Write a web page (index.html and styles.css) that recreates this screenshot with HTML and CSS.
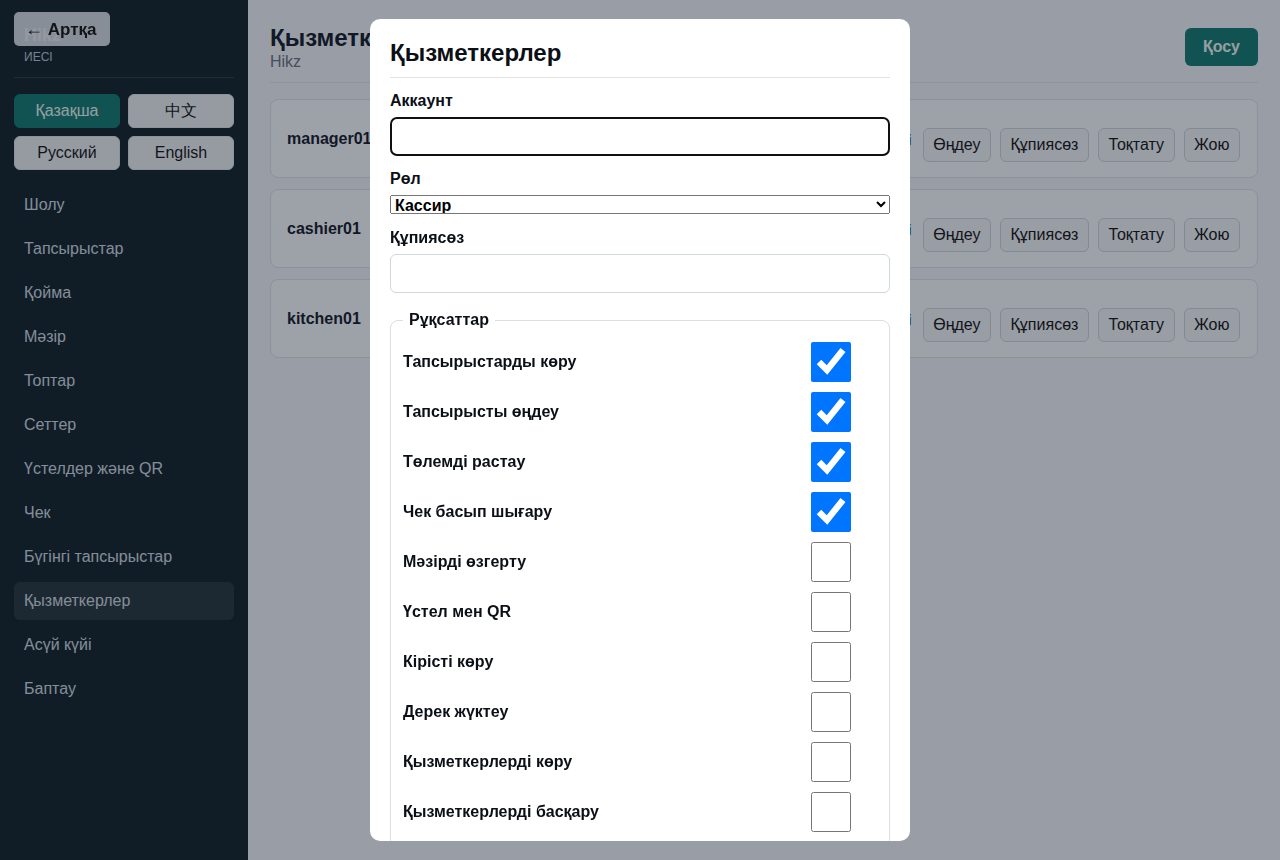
FILE: index.html
```html
<!DOCTYPE html>
<html lang="kk">
<head>
    <meta charset="utf-8">
    <title>Қызметкерлер — Hikz</title>
    <link rel="stylesheet" href="styles.css">
</head>
<body>
    <div class="layout">
        <aside class="sidebar">
            <div class="brand">
                <div class="brand-name">Hikz</div>
                <div class="brand-role">ИЕСІ</div>
            </div>

            <div class="langs">
                <button class="lang-btn active">Қазақша</button>
                <button class="lang-btn">中文</button>
                <button class="lang-btn">Русский</button>
                <button class="lang-btn">English</button>
            </div>

            <nav class="nav">
                <a class="nav-link" href="#">Шолу</a>
                <a class="nav-link" href="#">Тапсырыстар</a>
                <a class="nav-link" href="#">Қойма</a>
                <a class="nav-link" href="#">Мәзір</a>
                <a class="nav-link" href="#">Топтар</a>
                <a class="nav-link" href="#">Сеттер</a>
                <a class="nav-link" href="#">Үстелдер және QR</a>
                <a class="nav-link" href="#">Чек</a>
                <a class="nav-link" href="#">Бүгінгі тапсырыстар</a>
                <a class="nav-link active" href="#">Қызметкерлер</a>
                <a class="nav-link" href="#">Асүй күйі</a>
                <a class="nav-link" href="#">Баптау</a>
            </nav>
        </aside>

        <main class="main">
            <header class="page-head">
                <div>
                    <h1 class="page-title">Қызметкерлер</h1>
                    <div class="page-sub">Hikz</div>
                </div>
                <button class="btn-primary">Қосу</button>
            </header>

            <div class="staff-list">
                <div class="staff-card">
                    <div class="staff-name">manager01</div>
                    <div class="staff-actions">
                        <span class="status">Белсенді</span>
                        <button class="btn">Өңдеу</button>
                        <button class="btn">Құпиясөз</button>
                        <button class="btn">Тоқтату</button>
                        <button class="btn">Жою</button>
                    </div>
                </div>
                <div class="staff-card">
                    <div class="staff-name">cashier01</div>
                    <div class="staff-actions">
                        <span class="status">Белсенді</span>
                        <button class="btn">Өңдеу</button>
                        <button class="btn">Құпиясөз</button>
                        <button class="btn">Тоқтату</button>
                        <button class="btn">Жою</button>
                    </div>
                </div>
                <div class="staff-card">
                    <div class="staff-name">kitchen01</div>
                    <div class="staff-actions">
                        <span class="status">Белсенді</span>
                        <button class="btn">Өңдеу</button>
                        <button class="btn">Құпиясөз</button>
                        <button class="btn">Тоқтату</button>
                        <button class="btn">Жою</button>
                    </div>
                </div>
            </div>
        </main>
    </div>

    <!-- back link sits on top of the sidebar brand -->
    <a class="back-btn" href="#"><span class="back-arrow">←</span> Артқа</a>

    <div class="overlay">
        <div class="modal">
            <h2 class="modal-title">Қызметкерлер</h2>

            <label class="field-label" for="account">Аккаунт</label>
            <input class="field-input" id="account" type="text" autofocus>

            <label class="field-label" for="role">Рөл</label>
            <select class="field-select" id="role">
                <option>Кассир</option>
                <option>Менеджер</option>
                <option>Асүй</option>
            </select>

            <label class="field-label" for="password">Құпиясөз</label>
            <input class="field-input" id="password" type="password">

            <fieldset class="perms">
                <legend>Рұқсаттар</legend>
                <label class="perm-row"><span>Тапсырыстарды көру</span><input type="checkbox" checked></label>
                <label class="perm-row"><span>Тапсырысты өңдеу</span><input type="checkbox" checked></label>
                <label class="perm-row"><span>Төлемді растау</span><input type="checkbox" checked></label>
                <label class="perm-row"><span>Чек басып шығару</span><input type="checkbox" checked></label>
                <label class="perm-row"><span>Мәзірді өзгерту</span><input type="checkbox"></label>
                <label class="perm-row"><span>Үстел мен QR</span><input type="checkbox"></label>
                <label class="perm-row"><span>Кірісті көру</span><input type="checkbox"></label>
                <label class="perm-row"><span>Дерек жүктеу</span><input type="checkbox"></label>
                <label class="perm-row"><span>Қызметкерлерді көру</span><input type="checkbox"></label>
                <label class="perm-row"><span>Қызметкерлерді басқару</span><input type="checkbox"></label>
            </fieldset>
        </div>
    </div>
</body>
</html>
```

FILE: styles.css
```css
* {
    box-sizing: border-box;
}

body {
    margin: 0;
    font-family: "Liberation Sans", Arial, sans-serif;
    background: #f4f6f8;
    color: #111827;
}

.layout {
    display: flex;
    min-height: 100vh;
}

/* sidebar */
.sidebar {
    width: 248px;
    flex-shrink: 0;
    background: #102127;
    padding: 14px;
    color: #d3dbe0;
}

.brand {
    padding: 10px 10px 12px;
    border-bottom: 1px solid #2a3b42;
}

.brand-name {
    font-size: 18px;
    font-weight: bold;
    line-height: 22px;
    color: #fff;
}

.brand-role {
    margin-top: 3px;
    font-size: 12px;
    line-height: 16px;
    color: #b9c6d8;
}

.langs {
    display: grid;
    grid-template-columns: 1fr 1fr;
    gap: 8px;
    margin-top: 16px;
}

.lang-btn {
    height: 34px;
    font-family: inherit;
    font-size: 16px;
    background: #eef2f4;
    color: #111;
    border: 1px solid #dde3e6;
    border-radius: 6px;
}

.lang-btn.active {
    background: #0f7a6e;
    border-color: #0f7a6e;
    color: #eef7f5;
}

.nav {
    display: flex;
    flex-direction: column;
    gap: 6px;
    margin-top: 16px;
}

.nav-link {
    display: block;
    padding: 10px;
    font-size: 16px;
    line-height: 18px;
    color: #d3dbe0;
    text-decoration: none;
    border-radius: 6px;
}

.nav-link.active {
    background: rgba(255, 255, 255, 0.09);
}

.back-btn {
    position: fixed;
    top: 12px;
    left: 14px;
    width: 96px;
    height: 34px;
    padding-left: 11px;
    line-height: 34px;
    font-size: 17px;
    font-weight: bold;
    color: #111;
    text-decoration: none;
    background: rgba(232, 236, 240, 0.93);
    border-radius: 5px;
}

.back-arrow {
    font-weight: normal;
    font-size: 18px;
}

/* main column */
.main {
    flex: 1;
    padding: 24px 22px;
}

.page-head {
    display: flex;
    justify-content: space-between;
    align-items: center;
    padding-bottom: 10px;
    border-bottom: 1px solid #dfe4e8;
}

.page-title {
    margin: 0;
    font-size: 24px;
    line-height: 28px;
}

.page-sub {
    font-size: 16px;
    line-height: 20px;
    color: #6b7280;
}

.btn-primary {
    height: 38px;
    margin-top: -2px;
    padding: 0 18px;
    font-family: inherit;
    font-size: 16px;
    font-weight: bold;
    color: #eef7f5;
    background: #0f7a6e;
    border: none;
    border-radius: 6px;
}

.staff-list {
    display: flex;
    flex-direction: column;
    gap: 11px;
    margin-top: 16px;
}

.staff-card {
    display: flex;
    justify-content: space-between;
    align-items: center;
    height: 79px;
    padding: 0 17px 0 16px;
    background: #fbfcfd;
    border: 1px solid #dde3e7;
    border-radius: 8px;
}

.staff-name {
    font-size: 16px;
    font-weight: bold;
}

.staff-actions {
    display: flex;
    align-items: center;
    gap: 9px;
    padding-top: 12px;
}

.status {
    margin: 0 2px 10px 0;
    font-size: 14px;
    font-weight: bold;
    color: #0f7a6e;
}

.btn {
    height: 34px;
    padding: 0 9.5px;
    font-family: inherit;
    font-size: 16px;
    color: #111;
    background: #f3f5f7;
    border: 1px solid #cfd6db;
    border-radius: 6px;
}

/* modal */
.overlay {
    position: fixed;
    inset: 0;
    display: flex;
    justify-content: center;
    align-items: center;
    background: rgba(17, 24, 39, 0.4);
}

.modal {
    width: 540px;
    max-height: calc(100vh - 38px);
    overflow-y: auto;
    scrollbar-width: none;
    padding: 20px;
    background: #fff;
    border-radius: 10px;
    color: #0b0f16;
}

.modal-title {
    margin: 0;
    padding-bottom: 10px;
    font-size: 24px;
    line-height: 28px;
    border-bottom: 1px solid #dfe3e6;
}

.field-label {
    display: block;
    margin: 14px 0 7px;
    font-size: 16px;
    font-weight: bold;
    line-height: 18px;
}

.field-input {
    display: block;
    width: 100%;
    height: 39px;
    padding: 0 10px;
    font-family: inherit;
    font-size: 16px;
    border: 1px solid #cfd8dc;
    border-radius: 6px;
}

.field-select {
    display: block;
    width: 100%;
    height: 19px;
    margin-bottom: 15px;
    font-family: inherit;
    font-size: 16px;
    font-weight: bold;
}

.perms {
    margin: 18px 0 0;
    padding: 8px 12px 12px;
    border: 1px solid #d9e0e3;
    border-radius: 8px;
}

.perms legend {
    padding: 0 6px;
    font-size: 16px;
    font-weight: bold;
}

.perm-row {
    display: flex;
    justify-content: space-between;
    align-items: center;
    padding: 5px 0;
    font-size: 16px;
    font-weight: bold;
}

.perm-row input {
    width: 40px;
    height: 40px;
    margin: 0 26px 0 0;
}
```
